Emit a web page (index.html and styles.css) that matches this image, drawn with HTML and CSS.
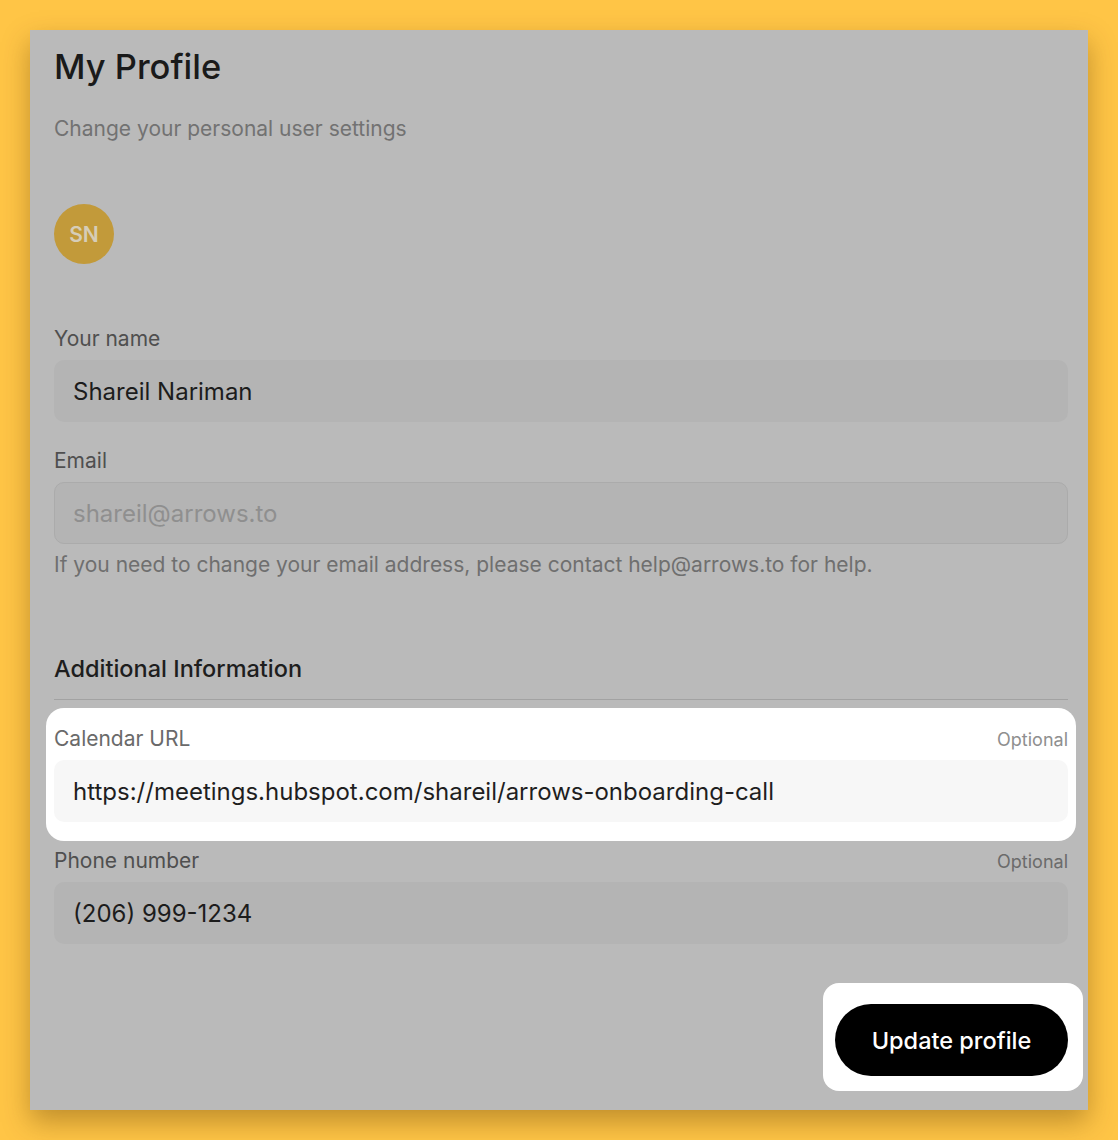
FILE: index.html
```html
<!DOCTYPE html>
<html>
<head>
<meta charset="utf-8">
<link rel="stylesheet" href="styles.css">
</head>
<body>
<div class="card">
  <h1 class="title">My Profile</h1>
  <p class="subtitle">Change your personal user settings</p>
  <div class="avatar">SN</div>

  <div class="field first">
    <div class="label-row"><span class="label">Your name</span></div>
    <div class="input">Shareil Nariman</div>
  </div>

  <div class="field">
    <div class="label-row"><span class="label">Email</span></div>
    <div class="input disabled">shareil@arrows.to</div>
    <p class="help">If you need to change your email address, please contact help@arrows.to for help.</p>
  </div>

  <h2 class="section">Additional Information</h2>

  <div class="highlight-field">
    <div class="label-row"><span class="label">Calendar URL</span><span class="optional">Optional</span></div>
    <div class="input light">https://meetings.hubspot.com/shareil/arrows-onboarding-call</div>
  </div>

  <div class="field phone">
    <div class="label-row"><span class="label">Phone number</span><span class="optional">Optional</span></div>
    <div class="input">(206) 999-1234</div>
  </div>

  <div class="actions">
    <div class="highlight-btn">
      <button class="btn">Update profile</button>
    </div>
  </div>
</div>
</body>
</html>
```
FILE: styles.css
```css
* { box-sizing: border-box; }
html, body { margin: 0; padding: 0; }
body {
  background: #FFC546;
  font-family: Inter, "Noto Sans", sans-serif;
  width: 1118px;
  height: 1140px;
  overflow: hidden;
}
.card {
  margin: 30px 0 0 30px;
  width: 1058px;
  height: 1080px;
  background: #BABABA;
  padding: 15px 20px 0 24px;
  box-shadow: 0 12px 26px rgba(90, 55, 0, 0.38);
  display: flex;
  flex-direction: column;
}
.title {
  margin: 0;
  font-size: 34.5px;
  line-height: 44px;
  font-weight: 500;
  color: #1a1a1a;
}
.subtitle {
  margin: 26px 0 0;
  font-size: 21px;
  line-height: 28px;
  color: #727272;
}
.avatar {
  margin-top: 61px;
  width: 60px;
  height: 60px;
  border-radius: 50%;
  background: #C29A3A;
  color: #D6CDB8;
  font-size: 21px;
  font-weight: 600;
  display: flex;
  align-items: center;
  justify-content: center;
}
.field { margin-top: 25px; }
.field.first { margin-top: 61px; }
.label-row {
  display: flex;
  justify-content: space-between;
  align-items: baseline;
  height: 28px;
  margin-bottom: 7px;
}
.label {
  font-size: 21px;
  line-height: 28px;
  color: #4f4f4f;
}
.optional {
  font-size: 18px;
  color: #6b6b6b;
}
.input {
  height: 62px;
  border-radius: 10px;
  background: #B4B4B4;
  padding: 0 19px;
  display: flex;
  align-items: center;
  font-size: 24px;
  color: #1c1c1c;
}
.input.disabled {
  border: 1px solid #ABABAB;
  color: #8f8f8f;
  padding: 0 18px;
}
.help {
  margin: 7px 0 0;
  font-size: 21px;
  line-height: 28px;
  color: #6f6f6f;
}
.section {
  margin: 75px 0 0;
  font-size: 23.5px;
  line-height: 30px;
  font-weight: 500;
  color: #1e1e1e;
  padding-bottom: 15px;
  border-bottom: 1px solid #A2A2A2;
}
.highlight-field {
  margin: 8px -8px 0;
  padding: 17px 8px 19px;
  background: #FFFFFF;
  border-radius: 18px;
}
.highlight-field .label { color: #6a6a6a; }
.highlight-field .optional { color: #8f8f8f; }
.input.light { background: #F7F7F7; color: #1f1f1f; }
.field.phone { margin-top: 6px; }
.actions {
  display: flex;
  justify-content: flex-end;
  margin: 39px -15px 0 0;
}
.highlight-btn {
  background: #FFFFFF;
  border-radius: 16px;
  padding: 21px 15px 15px 12px;
}
.btn {
  display: block;
  width: 233px;
  height: 72px;
  border: 0;
  border-radius: 36px;
  background: #000;
  color: #fff;
  font-family: Inter, "Noto Sans", sans-serif;
  font-size: 23.5px;
  font-weight: 500;
}
```
